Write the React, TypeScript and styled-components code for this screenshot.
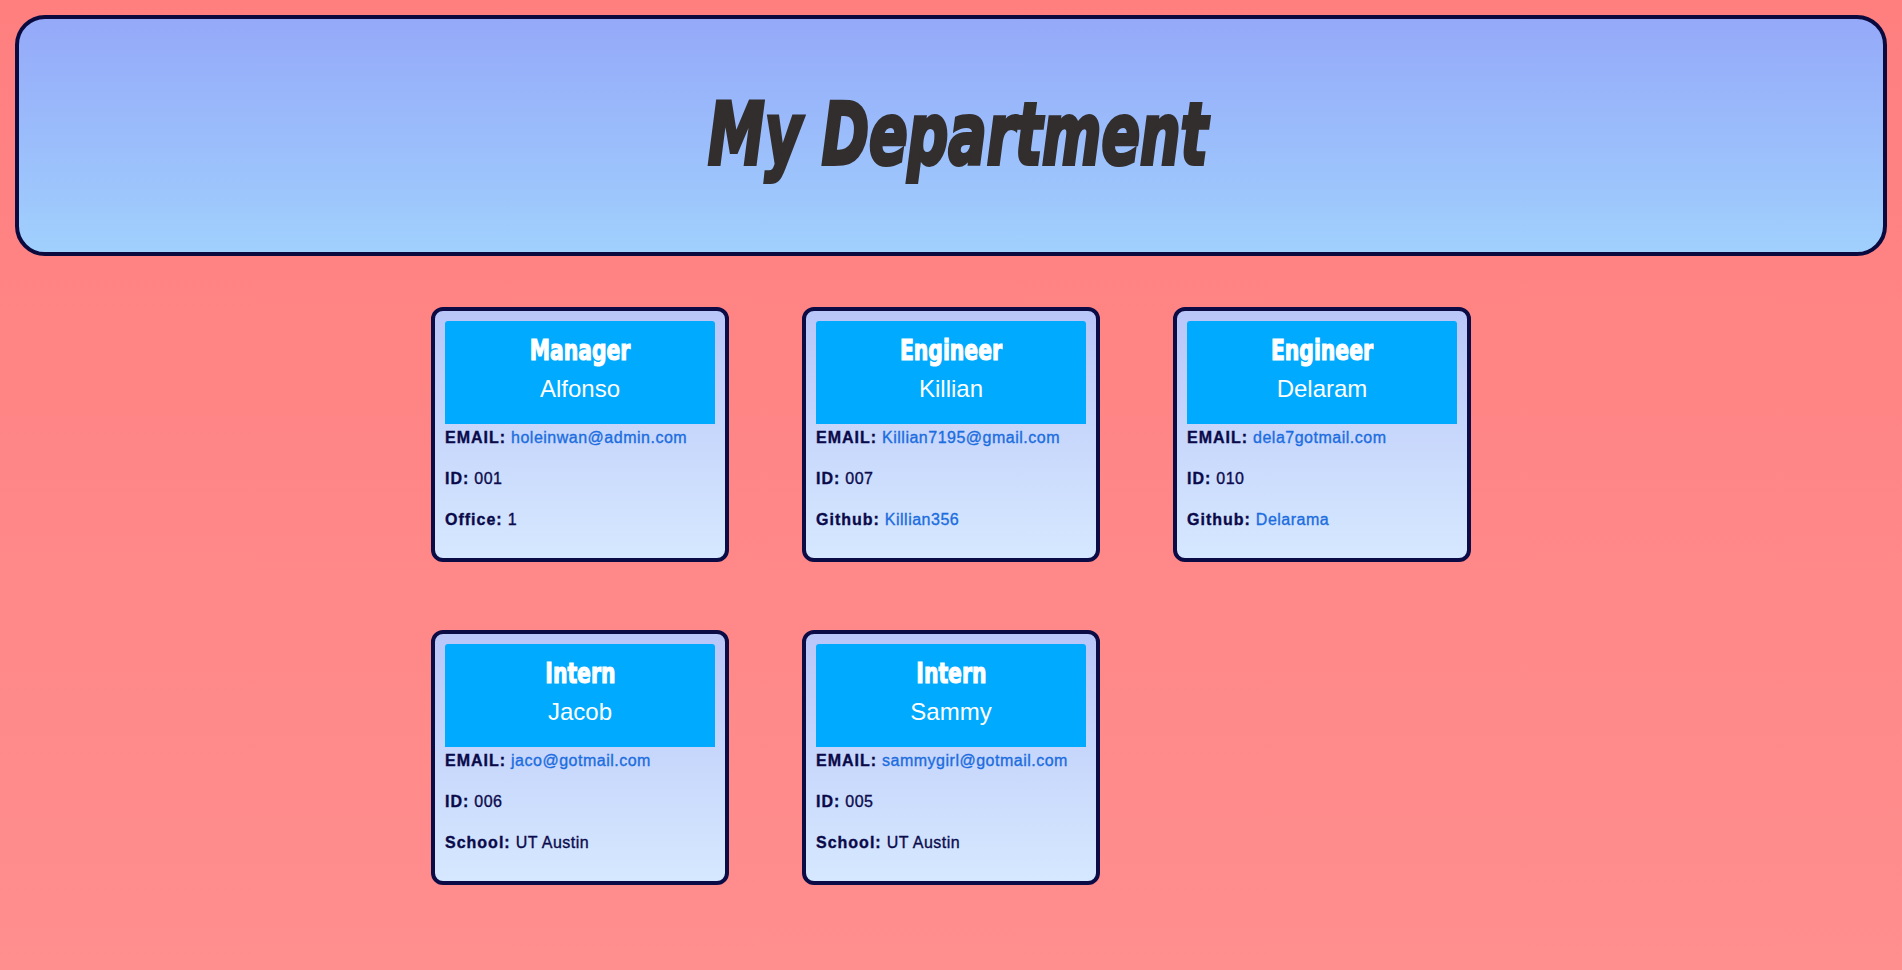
import React from "react";
import styled, { createGlobalStyle } from "styled-components";

const GlobalStyle = createGlobalStyle`
  html, body {
    margin: 0;
    padding: 0;
  }
  body {
    min-height: 100vh;
    background: linear-gradient(180deg, #ff7f7f 0%, #ff8e8e 100%);
    font-family: "Liberation Sans", Arial, sans-serif;
  }
`;

const Page = styled.div`
  display: flex;
  flex-direction: column;
  padding: 15px;
  min-height: 100vh;
  box-sizing: border-box;
`;

const Banner = styled.header`
  box-sizing: border-box;
  height: 241px;
  border: 4px solid #0a0a3e;
  border-radius: 30px;
  background: linear-gradient(180deg, #95a9f9 0%, #a0d0fd 100%);
  display: flex;
  align-items: center;
  justify-content: center;
`;

const Title = styled.h1`
  margin: 0 0 2px 14px;
  display: inline-block;
  font-family: "DejaVu Sans", "Liberation Sans", sans-serif;
  font-weight: bold;
  font-style: italic;
  font-size: 85px;
  line-height: 88px;
  color: #332e2e;
  transform: scaleX(0.67);
  -webkit-text-stroke: 4px #332e2e;
  white-space: nowrap;
`;

const CardGrid = styled.main`
  margin-top: 51px;
  display: grid;
  grid-template-columns: repeat(3, 298px);
  column-gap: 73px;
  row-gap: 68px;
  justify-content: center;
`;

const Card = styled.section`
  box-sizing: border-box;
  height: 255px;
  border: 4px solid #0b0b45;
  border-radius: 12px;
  padding: 10px;
  background: linear-gradient(180deg, #b9c6f8 0%, #d6e8ff 100%);
  display: flex;
  flex-direction: column;
`;

const CardHead = styled.div`
  box-sizing: border-box;
  height: 103px;
  background: #00aaff;
  border-radius: 3px 3px 0 0;
  padding-top: 13px;
  display: flex;
  flex-direction: column;
  align-items: center;
  color: #ffffff;
`;

const Role = styled.h2`
  margin: 0;
  display: inline-block;
  font-family: "DejaVu Sans", "Liberation Sans", sans-serif;
  font-weight: bold;
  font-size: 27.5px;
  line-height: 32px;
  transform: scaleX(0.74);
  -webkit-text-stroke: 1.2px #ffffff;
  white-space: nowrap;
`;

const Name = styled.h3`
  margin: 9px 0 0 0;
  font-family: "Liberation Sans", Arial, sans-serif;
  font-weight: normal;
  font-size: 24px;
  line-height: 28px;
`;

const Details = styled.div`
  display: flex;
  flex-direction: column;
  gap: 23px;
  margin-top: 4.5px;
`;

const Row = styled.p`
  margin: 0;
  font-size: 16px;
  line-height: 18px;
  color: #0b0b4d;
  letter-spacing: 0.5px;
  white-space: nowrap;
  -webkit-text-stroke: 0.35px currentColor;
`;

const Label = styled.strong`
  font-weight: bold;
  letter-spacing: 1px;
  color: #0a0a4a;
`;

const Link = styled.a`
  color: #1b6de0;
  text-decoration: none;
  letter-spacing: 0.5px;
`;

type Extra = { label: string; value: string; link?: boolean };

type Member = {
  role: string;
  name: string;
  email: string;
  id: string;
  extra: Extra;
};

const members: Member[] = [
  { role: "Manager", name: "Alfonso", email: "holeinwan@admin.com", id: "001", extra: { label: "Office:", value: "1" } },
  { role: "Engineer", name: "Killian", email: "Killian7195@gmail.com", id: "007", extra: { label: "Github:", value: "Killian356", link: true } },
  { role: "Engineer", name: "Delaram", email: "dela7gotmail.com", id: "010", extra: { label: "Github:", value: "Delarama", link: true } },
  { role: "Intern", name: "Jacob", email: "jaco@gotmail.com", id: "006", extra: { label: "School:", value: "UT Austin" } },
  { role: "Intern", name: "Sammy", email: "sammygirl@gotmail.com", id: "005", extra: { label: "School:", value: "UT Austin" } },
];

const MemberCard: React.FC<{ m: Member }> = ({ m }) => (
  <Card>
    <CardHead>
      <Role>{m.role}</Role>
      <Name>{m.name}</Name>
    </CardHead>
    <Details>
      <Row>
        <Label>EMAIL:</Label> <Link href="#">{m.email}</Link>
      </Row>
      <Row>
        <Label>ID:</Label> {m.id}
      </Row>
      <Row>
        <Label>{m.extra.label}</Label>{" "}
        {m.extra.link ? <Link href="#">{m.extra.value}</Link> : m.extra.value}
      </Row>
    </Details>
  </Card>
);

export default function App() {
  return (
    <>
      <GlobalStyle />
      <Page>
        <Banner>
          <Title>My Department</Title>
        </Banner>
        <CardGrid>
          {members.map((m, i) => (
            <MemberCard key={i} m={m} />
          ))}
        </CardGrid>
      </Page>
    </>
  );
}
